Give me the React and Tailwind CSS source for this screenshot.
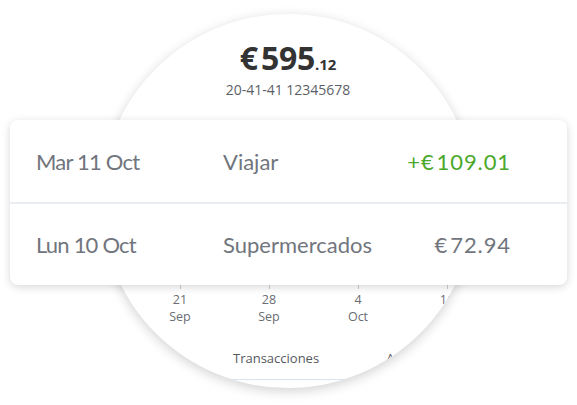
const ticks = [
  { day: '21', month: 'Sep' },
  { day: '28', month: 'Sep' },
  { day: '4', month: 'Oct' },
  { day: '11', month: 'Oct' },
]

const rows = [
  { date: 'Mar 11 Oct', label: 'Viajar', amount: '109.01', sign: '+', credit: true },
  { date: 'Lun 10 Oct', label: 'Supermercados', amount: '72.94', sign: '', credit: false },
]

function PhoneCircle() {
  return (
    <div className="ml-[101px] mt-[14px] w-[374px] h-[374px] rounded-full bg-white overflow-hidden shadow-[0_3px_12px_rgba(0,0,0,0.18)] font-['Open_Sans',sans-serif]">
      <div className="flex flex-col items-center pt-[28px]">
        <div className="flex items-baseline text-[#333] font-bold leading-none">
          <span className="text-[32px] mr-[3px]">€</span>
          <span className="text-[32px] tracking-[-0.3px]">595</span>
          <span className="text-[15px]">.12</span>
        </div>
        <div className="mt-[9px] text-[14px] text-[#5c5f66] leading-none">20-41-41 12345678</div>
      </div>

      <div className="mt-[187px] flex">
        {ticks.map((t, i) => (
          <div
            key={t.day}
            className={`w-[48px] shrink-0 flex flex-col items-center text-[12.5px] leading-[17px] text-[#6a6d73] ${i === 0 ? 'ml-[55px]' : 'ml-[41px]'}`}
          >
            <span className="w-px h-[5px] bg-[#c9ccd1]" />
            <span className="mt-[2px]">{t.day}</span>
            <span>{t.month}</span>
          </div>
        ))}
      </div>

      <div className="mt-[27px] flex text-[13px] text-[#55585e] leading-none whitespace-nowrap">
        <span className="ml-[132px] shrink-0">Transacciones</span>
        <span className="ml-[67px] shrink-0">Análisis</span>
      </div>
      <div className="mt-[14px] h-px bg-[#d6e4f0]" />
    </div>
  )
}

export default function App() {
  return (
    <div className="relative w-[577px] h-[405px] bg-white overflow-hidden">
      <PhoneCircle />

      <div className="absolute left-[10px] top-[120px] w-[557px] h-[165px] bg-white rounded-lg shadow-[0_2px_9px_rgba(0,0,0,0.16)] flex flex-col font-['Lato',sans-serif] text-[22px] text-[#71757d]">
        {rows.map((r, i) => (
          <div
            key={r.date}
            className={`flex items-center pl-[26px] pr-[56px] ${i === 0 ? 'h-[84px] border-b-2 border-[#eaeef3]' : 'flex-1'}`}
          >
            <span className="w-[187px] tracking-[-0.8px]">{r.date}</span>
            <span className="flex-1">{r.label}</span>
            <span className={`tracking-[0.9px] ${r.credit ? 'text-[#4ba82b]' : ''}`}>
              {r.sign}
              <span className="mr-[2px]">€</span>
              {r.amount}
            </span>
          </div>
        ))}
      </div>
    </div>
  )
}
